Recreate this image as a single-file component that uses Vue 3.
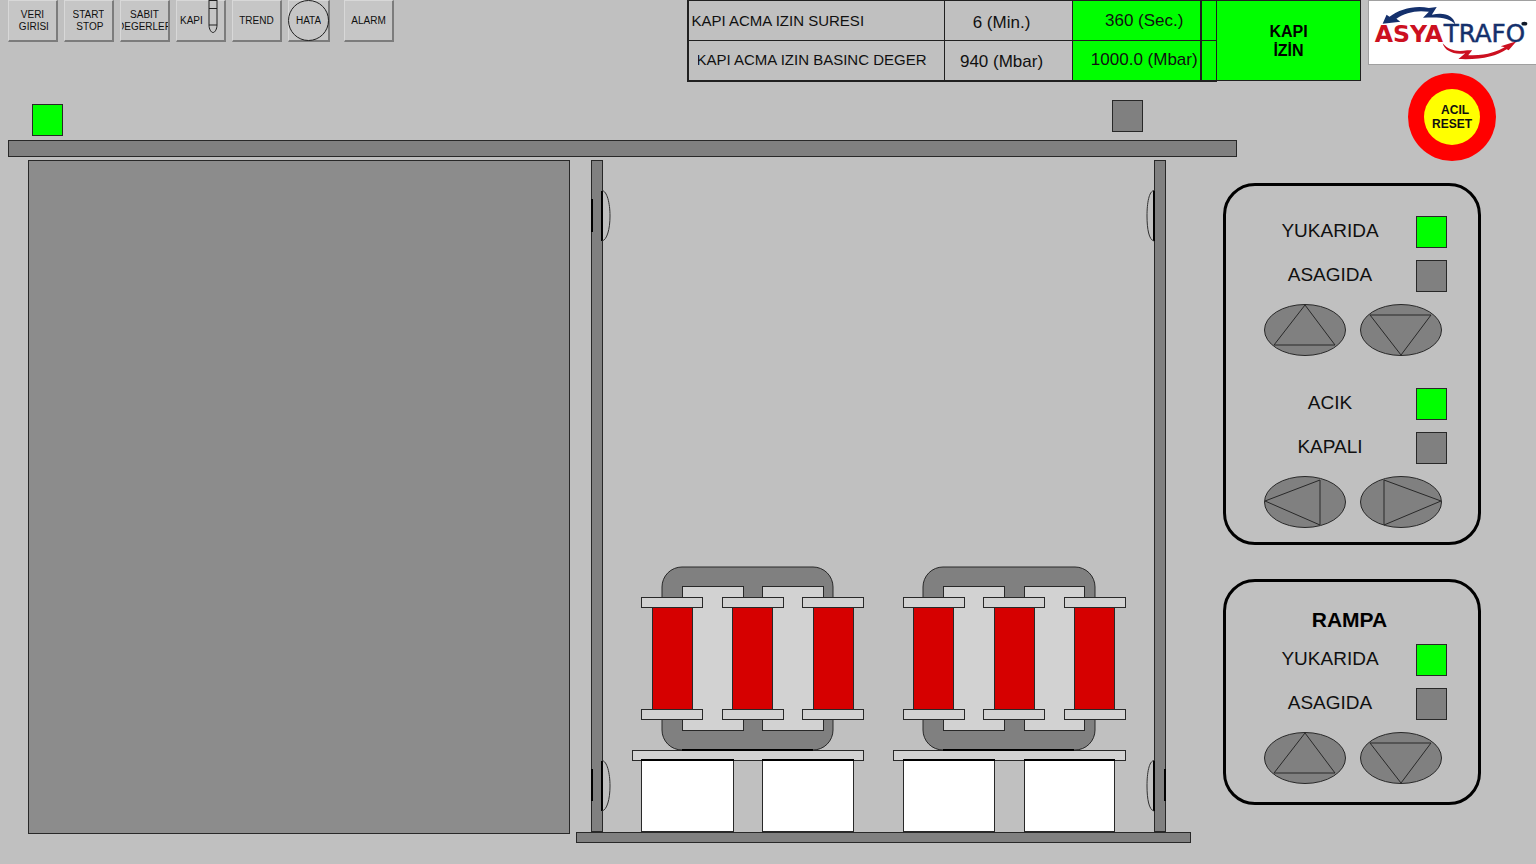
<script setup>
const tools = [
  { id: 'veri', text: 'VERI\n GIRISI' },
  { id: 'start', text: 'START\n STOP' },
  { id: 'sabit', text: 'SABIT\nDEGERLER' },
  { id: 'kapi', text: 'KAPI', icon: 'pen' },
  { id: 'trend', text: 'TREND' },
  { id: 'hata', text: 'HATA', icon: 'ring' },
  { id: 'alarm', text: 'ALARM' },
]

const emergencyText = '  ACIL\nRESET'

const arrows = {
  up: { label: 'Yukari', points: '41,1 71,41 10,41' },
  down: { label: 'Asagi', points: '41,51 71,11 10,11' },
  left: { label: 'Ac', points: '1,25 56,4 56,49' },
  right: { label: 'Kapat', points: '81,25 24,4 24,49' },
}

const panels = [
  {
    id: 'kapi',
    groups: [
      { rows: [['YUKARIDA', true], ['ASAGIDA', false]], keys: ['up', 'down'] },
      { rows: [['ACIK', true], ['KAPALI', false]], keys: ['left', 'right'] },
    ],
  },
  {
    id: 'rampa',
    title: 'RAMPA',
    groups: [{ rows: [['YUKARIDA', true], ['ASAGIDA', false]], keys: ['up', 'down'] }],
  },
]

const units = [
  {
    id: 1,
    core: [662, 171],
    windows: [[682, 61], [762, 61]],
    plates: [641, 722, 802],
    coils: [652, 732, 813],
    base: [632, 231],
    blocks: [[641, 92], [762, 91]],
  },
  {
    id: 2,
    core: [923, 172],
    windows: [[943, 61], [1024, 60]],
    plates: [903, 983, 1064],
    coils: [913, 994, 1074],
    base: [893, 232],
    blocks: [[903, 91], [1024, 90]],
  },
]
</script>

<template>
  <div class="screen">
    <header class="top">
      <nav class="tools">
        <button v-for="t in tools" :key="t.id" type="button" class="tool" :class="t.id">
          <span class="tool-text">{{ t.text }}</span>
          <svg v-if="t.icon === 'pen'" class="pen" width="10" height="34" viewBox="0 0 10 34" aria-hidden="true">
            <path d="M1 0V25H9V0M1 .5H9M1 8.500H9M1 25C1 29 3 32.500 5 32.500S9 29 9 25" />
          </svg>
          <svg v-if="t.icon === 'ring'" class="ring" width="42" height="42" viewBox="0 0 42 42" aria-hidden="true">
            <circle cx="20.500" cy="20.500" r="20" />
          </svg>
        </button>
      </nav>

      <table class="limits">
        <colgroup>
          <col class="c-name">
          <col class="c-value">
          <col class="c-value">
          <col class="c-flag">
        </colgroup>
        <tbody>
          <tr>
            <th scope="row"><span class="name">KAPI ACMA IZIN SURESI</span></th>
            <td class="set">6 (Min.)</td>
            <td class="live">360 (Sec.)</td>
            <td class="flag"></td>
          </tr>
          <tr>
            <th scope="row"><span class="name cut"><span>KAPI ACMA IZIN BASINC DEGER</span></span></th>
            <td class="set">940 (Mbar)</td>
            <td class="live">1000.0 (Mbar)</td>
            <td class="flag"></td>
          </tr>
        </tbody>
      </table>
      <button type="button" class="permit">KAPI<br>İZİN</button>
    </header>

    <div class="brand">
      <svg class="logo" viewBox="0 0 168 64" role="img" aria-label="Asyatrafo">
        <path class="navy" d="M13 23L17 14L20 16C30 8 46 4 60 7L68 6L63 14C75 11 85 14 87 24C81 17 71 16 54 17L60 11C47 9 36 12 27 18L31 21Z" />
        <path class="red" d="M74 43C80 50 88 52 99 50L104 50L100 55C118 56 130 51 137 47L133 46L149 41L141 50L139 49C128 56 114 60 90 59L97 53C86 55 76 51 74 43Z" />
        <text class="word asya" x="5" y="42">ASYA</text>
        <text class="word trafo" x="75" y="42">TRAFO</text>
        <ellipse cx="157" cy="23" rx="3" ry="2" class="reg" />
      </svg>
      <button type="button" class="emergency"><span class="emergency-core">{{ emergencyText }}</span></button>
    </div>

    <svg class="plant" viewBox="0 80 1216 784" role="img" aria-label="Firin ve trafolar">
      <g class="crisp">
        <rect class="on" x="32.500" y="104.500" width="30" height="31" />
        <rect class="steel" x="1112.500" y="100.500" width="30" height="31" />
        <rect class="steel" x="8.500" y="140.500" width="1228" height="16" />
        <rect class="door" x="28.500" y="160.500" width="541" height="673" />
        <rect class="steel" x="591.500" y="160.500" width="11" height="671" />
        <rect class="steel" x="1154.500" y="160.500" width="11" height="671" />
        <rect class="steel" x="576.500" y="832.500" width="614" height="10" />
        <path class="heavy" d="M592 199V232M592 769V801M602 191V241M602 761V811M1154 191V241M1154 761V811M1164.500 769V801" />
      </g>
      <path class="thin" d="M602 190.500C607 191 610 203 610 216S607 240 602 241M602 760.500C607 761 610 773 610 786S607 810 602 811M1154 190.500C1149 191 1147 203 1147 216S1149 240 1154 241M1154 760.500C1149 761 1147 773 1147 786S1149 810 1154 811" />

      <g v-for="u in units" :key="u.id">
        <rect class="steel" :x="u.core[0]" y="567" :width="u.core[1]" height="183" rx="20" />
        <g class="crisp">
          <rect v-for="w in u.windows" :key="w[0]" class="pale" :x="w[0] + 0.5" y="586.500" :width="w[1]" height="144" />
          <rect v-for="c in u.coils" :key="c" class="coil" :x="c + 0.5" y="607.500" width="40" height="102" />
          <rect v-for="p in u.plates" :key="'t' + p" class="pale" :x="p + 0.5" y="597.500" width="61" height="10" />
          <rect v-for="p in u.plates" :key="'b' + p" class="pale" :x="p + 0.5" y="709.500" width="61" height="10" />
          <rect class="pale" :x="u.base[0] + 0.5" y="750.500" :width="u.base[1]" height="10" />
          <rect v-for="b in u.blocks" :key="b[0]" class="block" :x="b[0] + 0.5" y="760.500" :width="b[1]" height="71" />
          <rect class="ink" :x="u.core[0] + 20" y="749" width="131" height="2" />
          <rect v-for="b in u.blocks" :key="'k' + b[0]" class="ink" :x="b[0]" y="759" :width="b[1] + 1" height="2" />
        </g>
      </g>
    </svg>

    <aside class="panels">
      <section v-for="p in panels" :key="p.id" class="panel" :class="p.id">
        <h2 v-if="p.title">{{ p.title }}</h2>
        <div v-for="(g, i) in p.groups" :key="i" class="group">
          <div v-for="r in g.rows" :key="r[0]" class="row">
            <span class="label">{{ r[0] }}</span>
            <span class="lamp" :class="{ lit: r[1] }"></span>
          </div>
          <div class="keys">
            <button v-for="k in g.keys" :key="k" type="button" class="key" :aria-label="arrows[k].label">
              <svg width="82" height="52" viewBox="0 0 82 52" aria-hidden="true">
                <ellipse cx="41" cy="26" rx="40.500" ry="25.500" />
                <polygon :points="arrows[k].points" />
              </svg>
            </button>
          </div>
        </div>
      </section>
    </aside>
  </div>
</template>

<style>
body {
  background: #c0c0c0;
}
</style>

<style scoped>
.screen {
  display: grid;
  grid-template-columns: minmax(0, 1fr) 152px 168px;
  grid-template-rows: 80px 103px auto;
  font-family: "Liberation Sans", Arial, sans-serif;
  color: #101010;
  background: #c0c0c0;
}
button {
  font-family: inherit;
  color: inherit;
  margin: 0;
  padding: 0;
  border: 0;
  cursor: pointer;
}
.top {
  grid-column: 1 / 3;
  grid-row: 1;
  display: flex;
  align-items: flex-start;
  padding-right: 7px;
}
.tools {
  display: flex;
  gap: 6px;
  padding-left: 8px;
  margin-right: auto;
}
.tool {
  position: relative;
  display: flex;
  align-items: center;
  justify-content: center;
  width: 50px;
  height: 42px;
  background: #c6c6c6;
  border: solid;
  border-width: 1px 2px 2px 1px;
  border-color: #d8d8d8 #7c7c7c #7c7c7c #d8d8d8;
  font-size: 10px;
  line-height: 12px;
}
.tool-text {
  display: flex;
  justify-content: center;
  max-width: 46px;
  overflow: hidden;
  white-space: pre;
  text-align: center;
}
.kapi.tool {
  justify-content: flex-start;
  padding-left: 3px;
}
.hata.tool {
  width: 42px;
  margin-right: 8px;
}
.pen,
.ring {
  position: absolute;
  fill: none;
  stroke: #202020;
  stroke-width: 1;
}
.pen {
  top: -1px;
  right: 6px;
}
.ring {
  top: -1px;
  left: -1px;
}
.limits {
  width: 530px;
  height: 81px;
  table-layout: fixed;
  border-collapse: collapse;
  border: 2px solid #202020;
  border-top-width: 1px;
  border-right-width: 1px;
}
.c-name {
  width: 257px;
}
.c-value {
  width: 128px;
}
.c-flag {
  width: 16px;
}
.limits th,
.limits td {
  box-sizing: border-box;
  height: 40px;
  padding: 0;
  border: 1px solid #202020;
  font-weight: 400;
  line-height: 20px;
  white-space: nowrap;
}
.limits th {
  font-size: 15px;
  text-align: left;
}
.limits td {
  font-size: 17px;
  text-align: center;
}
.name {
  display: block;
  padding-left: 3px;
}
.cut {
  display: flex;
  justify-content: flex-end;
  width: 229px;
  margin-left: 9px;
  padding: 0;
  overflow: hidden;
}
.limits .set {
  padding: 4px 14px 0 0;
}
.limits .live {
  padding-left: 16px;
  background: #00ff00;
  border-right-width: 2px;
}
.limits .flag {
  background: #00ff00;
}
.permit {
  width: 144px;
  height: 81px;
  background: #00ff00;
  border: 1px solid #202020;
  border-left: 0;
  font-size: 16px;
  font-weight: 700;
  line-height: 19px;
  color: #000;
}
.brand {
  grid-column: 3;
  grid-row: 1 / 3;
  display: flex;
  flex-direction: column;
  align-items: center;
  gap: 8px;
}
.logo {
  display: block;
  box-sizing: border-box;
  width: 100%;
  height: 65px;
  background: #fff;
  border: 1px solid #a0a0a0;
  border-right: 0;
}
.word {
  font-family: "DejaVu Sans", Verdana, sans-serif;
}
.asya {
  font-size: 24px;
  font-weight: 700;
  fill: #cc1020;
}
.trafo {
  font-size: 25px;
  fill: #14306c;
  stroke: #14306c;
  stroke-width: 0.5;
}
.navy {
  fill: #14306c;
}
.red {
  fill: #cc1020;
}
.reg {
  fill: #101828;
}
.emergency {
  display: flex;
  align-items: center;
  justify-content: center;
  width: 88px;
  height: 88px;
  border-radius: 50%;
  background: #ff0000;
}
.emergency-core {
  display: flex;
  align-items: center;
  justify-content: center;
  width: 56px;
  height: 56px;
  border-radius: 50%;
  background: #ffff00;
  white-space: pre;
  font-size: 12px;
  font-weight: 700;
  line-height: 14px;
}
.plant {
  grid-column: 1;
  grid-row: 2 / 4;
  display: block;
  width: 100%;
  height: auto;
  overflow: visible;
}
.plant rect {
  stroke: #282828;
  stroke-width: 1;
}
.crisp {
  shape-rendering: crispEdges;
}
.plant .on {
  fill: #00ff00;
}
.plant .steel {
  fill: #808080;
}
.plant .door {
  fill: #8c8c8c;
}
.plant .pale {
  fill: #d2d2d2;
}
.plant .coil {
  fill: #d60000;
}
.plant .block {
  fill: #fff;
}
.plant .ink {
  fill: #000;
  stroke: none;
}
.heavy {
  fill: none;
  stroke: #000;
  stroke-width: 2;
}
.thin {
  fill: none;
  stroke: #303030;
}
.panels {
  grid-column: 2 / 4;
  grid-row: 3;
  display: flex;
  flex-direction: column;
  gap: 34px;
  padding: 0 55px 0 7px;
}
.panel {
  padding: 30px 31px 14px 38px;
  border: 3px solid #000;
  border-radius: 32px;
}
.panel.rampa {
  padding-top: 25px;
  padding-bottom: 18px;
}
.panel h2 {
  margin: 0 12px 12px 0;
  font-size: 21px;
  line-height: 25px;
  text-align: center;
  color: #000;
}
.group {
  display: flex;
  flex-direction: column;
  gap: 12px;
}
.group + .group {
  margin-top: 32px;
}
.row {
  display: flex;
  justify-content: space-between;
}
.label {
  width: 132px;
  font-size: 19px;
  line-height: 30px;
  text-align: center;
}
.lamp {
  box-sizing: border-box;
  width: 31px;
  height: 32px;
  background: #808080;
  border: 1px solid #282828;
}
.lamp.lit {
  background: #00ff00;
}
.keys {
  display: flex;
  gap: 14px;
}
.key {
  display: block;
  height: 52px;
  background: none;
}
.key svg {
  display: block;
  fill: #808080;
  stroke: #282828;
  stroke-width: 1;
}
</style>
